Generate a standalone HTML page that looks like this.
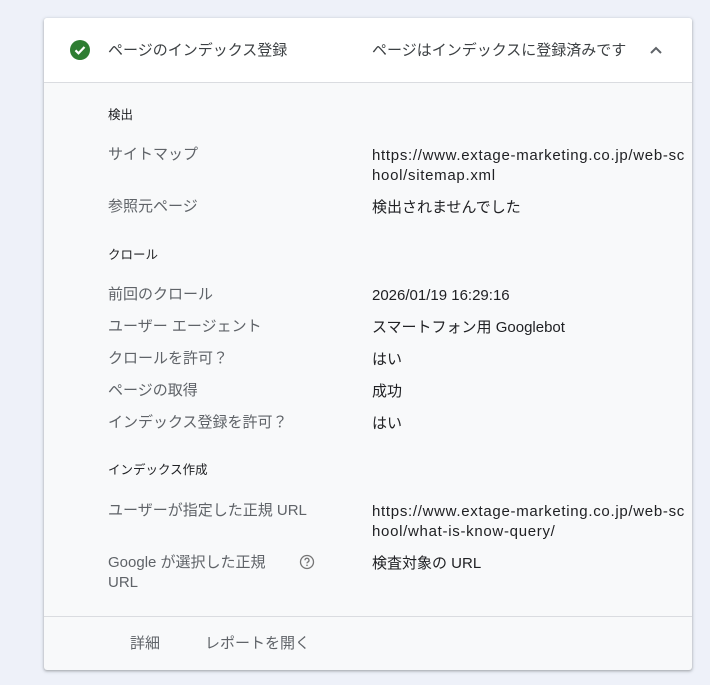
<!DOCTYPE html>
<html><head><meta charset="utf-8"><style>
body{margin:0;width:710px;height:685px;background:#eef1f9;font-family:"Liberation Sans","Noto Sans CJK JP",sans-serif;position:relative;overflow:hidden}
.card{position:absolute;left:44px;top:18px;width:648px;height:652px;background:#f8f9fa;border-radius:3px;box-shadow:0 1px 2px rgba(60,64,67,.3),0 1px 3px 1px rgba(60,64,67,.15)}
.hdr{position:absolute;left:0;top:0;width:648px;height:64px;background:#fff;border-bottom:1px solid #dadce0;border-radius:3px 3px 0 0}
.t{position:absolute;font-size:15px;line-height:20px;white-space:nowrap;margin-top:1px}
.k{color:#5f6368}.v{color:#202124}.s{font-size:12.5px;color:#202124}
.u{letter-spacing:0.7px}
.ft{position:absolute;left:0;top:598px;width:648px;border-top:1px solid #dadce0}
</style></head><body>
<div class="card">
<div class="hdr">
<svg style="position:absolute;left:26px;top:22px" width="20" height="20" viewBox="0 0 20 20"><circle cx="10" cy="10" r="10" fill="#2e7d32"/><path d="M5.5 10.3l3 3 6-6.3" stroke="#fff" stroke-width="2.2" fill="none"/></svg>
<div class="t v" style="left:64px;top:22px;color:#3c4043">ページのインデックス登録</div>
<div class="t v" style="left:328px;top:22px;color:#3c4043">ページはインデックスに登録済みです</div>
<svg style="position:absolute;left:605px;top:27px" width="14" height="10" viewBox="0 0 14 10"><path d="M2 8l5-5 5 5" stroke="#5f6368" stroke-width="2" fill="none"/></svg>
</div>
<div class="t s" style="left:64px;top:86px">検出</div>
<div class="t k" style="left:64px;top:126px">サイトマップ</div>
<div class="t v u" style="left:328px;top:127px">https://www.extage-marketing.co.jp/web-sc</div>
<div class="t v u" style="left:328px;top:147px">hool/sitemap.xml</div>
<div class="t k" style="left:64px;top:178px">参照元ページ</div>
<div class="t v" style="left:328px;top:179px">検出されませんでした</div>
<div class="t s" style="left:64px;top:226px">クロール</div>
<div class="t k" style="left:64px;top:266px">前回のクロール</div>
<div class="t v" style="left:328px;top:267px">2026/01/19 16:29:16</div>
<div class="t k" style="left:64px;top:298px">ユーザー エージェント</div>
<div class="t v" style="left:328px;top:299px">スマートフォン用 Googlebot</div>
<div class="t k" style="left:64px;top:330px">クロールを許可？</div>
<div class="t v" style="left:328px;top:331px">はい</div>
<div class="t k" style="left:64px;top:362px">ページの取得</div>
<div class="t v" style="left:328px;top:363px">成功</div>
<div class="t k" style="left:64px;top:394px">インデックス登録を許可？</div>
<div class="t v" style="left:328px;top:395px">はい</div>
<div class="t s" style="left:64px;top:441px">インデックス作成</div>
<div class="t k" style="left:64px;top:482px">ユーザーが指定した正規 URL</div>
<div class="t v u" style="left:328px;top:483px">https://www.extage-marketing.co.jp/web-sc</div>
<div class="t v u" style="left:328px;top:503px">hool/what-is-know-query/</div>
<div class="t k" style="left:64px;top:534px">Google が選択した正規</div>
<div class="t k" style="left:64px;top:554px">URL</div>
<svg style="position:absolute;left:255px;top:536px" width="16" height="16" viewBox="0 0 16 16"><circle cx="8" cy="8" r="6.5" stroke="#757575" stroke-width="1.3" fill="none"/><path d="M6 6.3a2 2 0 1 1 2.8 1.8c-.6.3-.8.6-.8 1.3" stroke="#757575" stroke-width="1.3" fill="none"/><circle cx="8" cy="11.3" r=".8" fill="#757575"/></svg>
<div class="t v" style="left:328px;top:535px">検査対象の URL</div>
<div class="ft"></div>
<div class="t k" style="left:86px;top:615px">詳細</div>
<div class="t k" style="left:161px;top:615px">レポートを開く</div>
</div>
</body></html>
